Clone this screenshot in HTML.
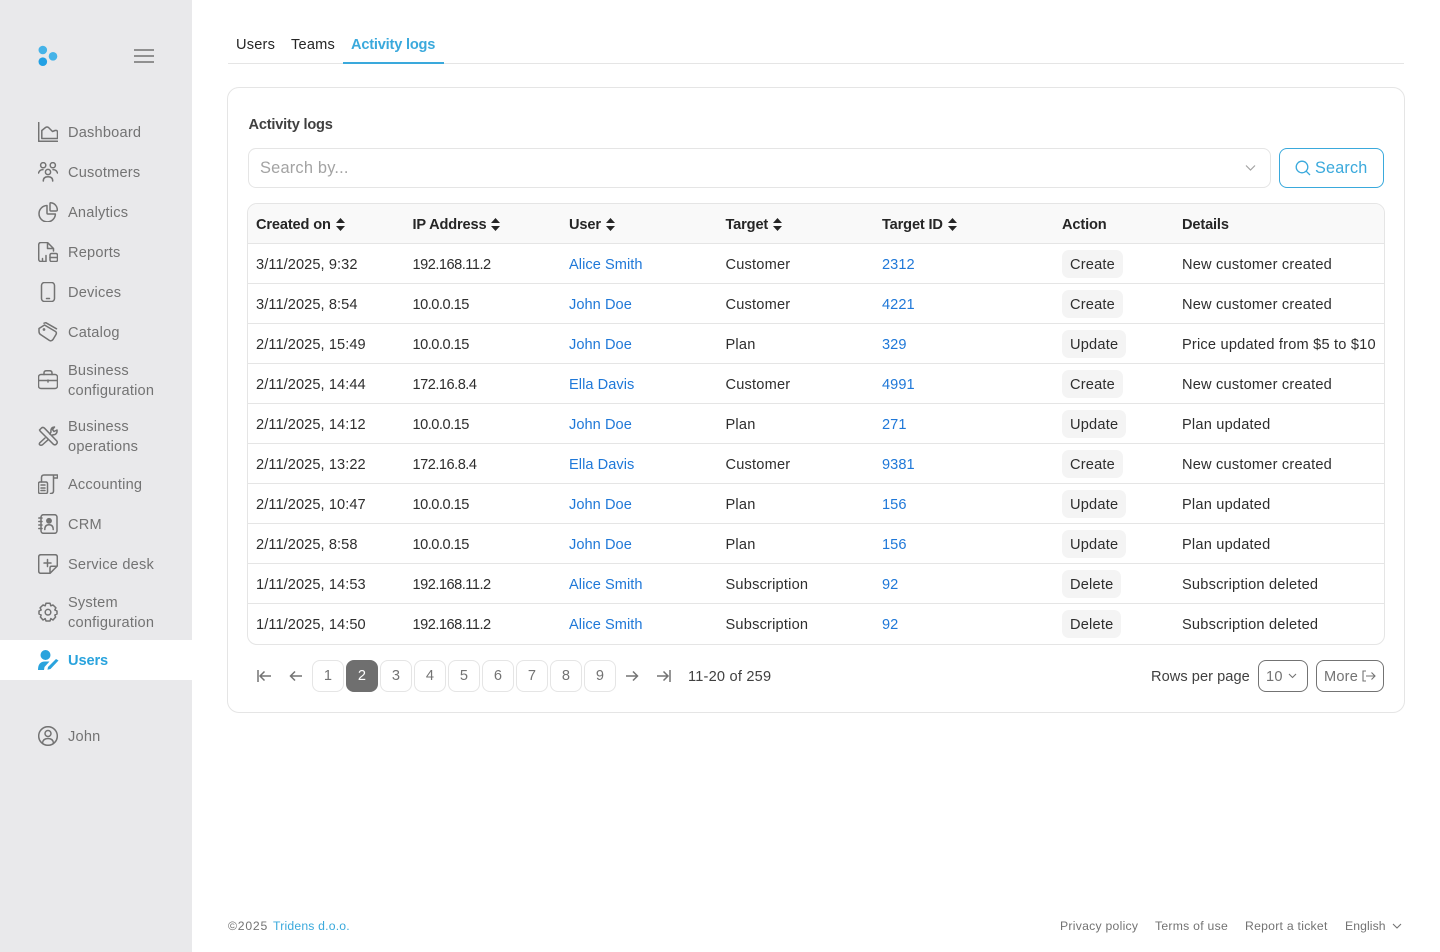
<!DOCTYPE html>
<html lang="en"><head><meta charset="utf-8"><title>Activity logs</title>
<style>
*{box-sizing:border-box}
html,body{margin:0;padding:0;width:1440px;height:952px;overflow:hidden;background:#fff;font-family:"Liberation Sans",sans-serif;font-size:14.6px;letter-spacing:.2px;color:#262626}
.a{position:absolute;white-space:nowrap}
#side{position:absolute;left:0;top:0;width:192px;height:952px;background:#e9e9eb}
.n{position:absolute;left:68px;margin-top:1px;color:#737373;line-height:20px;white-space:nowrap}
.i{position:absolute;left:38px;width:20px;height:20px;fill:none;stroke:#737373;stroke-width:1.5;stroke-linecap:round;stroke-linejoin:round}
.tab{position:absolute;top:37px;line-height:16px;color:#262626}
#card{position:absolute;left:227px;top:87px;width:1178px;height:626px;border:1px solid #e5e5e5;border-radius:12px}
#tw{position:absolute;left:247px;top:203px;width:1138px;height:442px;border:1px solid #e5e5e5;border-radius:10px;overflow:hidden}
table{border-collapse:collapse;table-layout:fixed;width:1136px}
th,td{padding:4px 0 0 8px;text-align:left;white-space:nowrap;height:40px;border-bottom:1px solid #e5e5e5;color:#2e2e2e;font-weight:400}
tr:last-child td{border-bottom:0}
th{background:#f9f9f9;font-weight:700;color:#262626;height:39px;padding-top:3px;letter-spacing:-.15px}
td a{color:#1f78d8;text-decoration:none;letter-spacing:.05px}
td:nth-child(1){letter-spacing:.08px}
td:nth-child(2){letter-spacing:-.5px}
.s{display:inline-block;width:9px;height:13px;margin-left:5px;vertical-align:-2px}
.c{display:inline-block;position:relative;top:-1px;height:28px;line-height:30px;padding:0 8px;background:#f4f4f4;border-radius:7px;vertical-align:middle}
.p{position:absolute;top:660px;width:32px;height:32px;border:1px solid #e5e5e5;border-radius:8px;text-align:center;line-height:30px;color:#737373}
.f{position:absolute;top:918px;font-size:12.2px;line-height:16px;color:#737373;white-space:nowrap;letter-spacing:.27px}
</style></head><body>
<div id="side">
<svg style="position:absolute;left:37px;top:45px" width="22" height="22" viewBox="0 0 22 22"><circle cx="5.8" cy="5" r="4.3" fill="#45b3e8"/><circle cx="16" cy="11.3" r="4.3" fill="#45b3e8"/><circle cx="5.8" cy="16.7" r="4.3" fill="#22a0e4"/></svg>
<svg style="position:absolute;left:134px;top:49px" width="20" height="14" viewBox="0 0 20 14" fill="none" stroke="#737373" stroke-width="1.4"><path d="M0 1H20M0 7H20M0 13H20"/></svg>

<svg class="i" style="top:122px" viewBox="0 0 20 20"><path d="M.7 .5V19.3H19.5M3.8 16.5H19.5V9.5Q19 8 17 8.5L14.5 9.5 10.5 5.5Q9 4.5 7.5 5.5L3.8 8.5Z"/></svg>
<div class="n" style="top:122px">Dashboard</div>

<svg class="i" style="top:162px" viewBox="0 0 20 20"><circle cx="5.2" cy="3.2" r="2.6"/><circle cx="14.8" cy="3.2" r="2.6"/><circle cx="10" cy="10" r="2.6"/><path d="M.5 11Q1.5 7.6 5 7.6M19.5 11Q18.5 7.6 15 7.6M5.3 19Q5.3 14.8 10 14.8T14.7 19"/></svg>
<div class="n" style="top:162px">Cusotmers</div>

<svg class="i" style="top:202px" viewBox="0 0 20 20"><path d="M9 3.5A8.2 8.2 0 1 0 17.4 12H10Q9 12 9 11Z"/><path d="M12.8 .8A7 7 0 0 1 19.3 8Q19.3 9 18.3 9H13Q12 9 12 8V1.6Q12 .7 12.8 .8Z"/></svg>
<div class="n" style="top:202px">Analytics</div>

<svg class="i" style="top:242px" viewBox="0 0 20 20"><path d="M8 19.5H3Q.7 19.5 .7 17V3Q.7 .5 3 .5H9.5L15.5 6.5V9M9.5 .5V6.5H15.5"/><path d="M4.5 16.5V19M8 13.5V19"/><rect x="12" y="11.5" width="7.5" height="8" rx="1.5"/><path d="M12 15.5H19.5"/></svg>
<div class="n" style="top:242px">Reports</div>

<svg class="i" style="top:282px" viewBox="0 0 20 20"><rect x="3.5" y=".5" width="13" height="19" rx="3"/><path d="M8.5 16.5H11.5"/></svg>
<div class="n" style="top:282px">Devices</div>

<svg class="i" style="top:322px" viewBox="0 0 20 20"><path d="M1 6.5 6.5 3 17.5 9.5Q19 10.5 18 12.5L15 17.5Q13.5 19.5 11.5 18.5L2.5 12.5Q1 11.5 1 9.5Z"/><path d="M6 1.2 7.8 .7 18.5 6.8"/><circle cx="6" cy="7.5" r=".6"/></svg>
<div class="n" style="top:322px">Catalog</div>

<svg class="i" style="top:370px" viewBox="0 0 20 20"><rect x=".5" y="4.5" width="19" height="14" rx="2.5"/><path d="M6 4.5V3Q6 .8 8.5 .8H11.5Q14 .8 14 3V4.5M.5 10.5H19.5M10 10V12"/></svg>
<div class="n" style="top:360px">Business<br>configuration</div>

<svg class="i" style="top:426px" viewBox="0 0 20 20"><path d="M1.5 4 3.5 2Q5 .8 6.5 2.2L18.8 15Q19.8 16.5 18.5 18T15.3 18.2L3 6Q2 5.2 1.5 4Z"/><path d="M7 12 1.8 16.8Q.7 18.3 2 19T4.8 18.5L10 13.8M11.8 8 13 6Q12.5 3 14.5 1.5L16.5 1 14.5 3.5 16 5.5 19 4Q19.5 7 17 8.5L14.5 9"/></svg>
<div class="n" style="top:416px">Business<br>operations</div>

<svg class="i" style="top:474px" viewBox="0 0 20 20"><rect x=".5" y="8" width="9" height="11.5" rx="1.5"/><path d="M3 11H7M3 14H7M3 16.5H7M3.5 8V3.5Q3.5 1 6 1H19.5V4H15.5M15.5 1.5V17Q15.5 19.5 12.5 19.5"/></svg>
<div class="n" style="top:474px">Accounting</div>

<svg class="i" style="top:514px" viewBox="0 0 20 20"><rect x="3" y=".7" width="16" height="18.6" rx="2.5"/><circle cx="11" cy="6.8" r="2.2" fill="#737373"/><path d="M6.8 15.5Q6.8 10.7 11 10.7T15.2 15.5M.8 4H4M.8 7.5H4M.8 11H4M.8 14.5H4"/></svg>
<div class="n" style="top:514px">CRM</div>

<svg class="i" style="top:554px" viewBox="0 0 20 20"><path d="M12 19.3H3Q.7 19.3.7 17V3Q.7.7 3 .7H17Q19.3.7 19.3 3V12L12 19.3ZM12 19V14Q12 12.3 13.5 12.3H19M9.5 5.5V12.5M6 9H13"/></svg>
<div class="n" style="top:554px">Service desk</div>

<svg class="i" style="top:602px" viewBox="0 0 20 20"><path d="M8 1.2H12L12.8 3.8 15 3 17.9 5.8 16.8 8 19 9V12L16.8 13 17.6 15 15 18 12.8 16.6 12 19H8L7.2 16.6 5 18 2.4 15 3.2 13 1 12V9L3.2 8 2.1 5.8 5 3 7.2 3.8Z"/><circle cx="10" cy="10.2" r="2.8"/></svg>
<div class="n" style="top:592px">System<br>configuration</div>

<div style="position:absolute;left:0;top:640px;width:192px;height:40px;background:#fff"></div>
<svg style="position:absolute;left:38px;top:650px" width="21" height="20" viewBox="0 0 21 20" fill="#29a3dd"><circle cx="7.5" cy="5" r="5"/><path d="M0 20Q0 11.5 7 11.5H11.5L6.5 17 6 20Z"/><path d="M9.5 19.8 10 17 18 9 20.5 10.5 12.5 19Z"/></svg>
<div class="n" style="top:650px;color:#29a3dd;font-weight:700;letter-spacing:-.1px">Users</div>

<svg class="i" style="top:726px" viewBox="0 0 20 20"><circle cx="10" cy="10" r="9.3"/><circle cx="10" cy="7.5" r="3"/><path d="M4.5 17Q5 12.5 10 12.5T15.5 17"/></svg>
<div class="n" style="top:726px">John</div>
</div>

<div class="tab" style="left:236px">Users</div>
<div class="tab" style="left:291px">Teams</div>
<div class="tab" style="left:351px;color:#3aa9dc;font-weight:700;letter-spacing:-.2px">Activity logs</div>
<div style="position:absolute;left:228px;top:63px;width:1176px;height:1px;background:#e5e5e5"></div>
<div style="position:absolute;left:343px;top:62px;width:101px;height:2px;background:#3aa9dc"></div>

<div id="card"></div>
<div class="a" style="left:248.5px;top:117px;line-height:16px;font-weight:700;color:#404040;letter-spacing:-.2px">Activity logs</div>

<div style="position:absolute;left:248px;top:148px;width:1023px;height:40px;border:1px solid #e5e5e5;border-radius:8px"></div>
<div class="a" style="left:260px;top:158px;line-height:20px;font-size:16.4px;color:#a3a3a3">Search by...</div>
<svg style="position:absolute;left:1245px;top:164px" width="11" height="8" viewBox="0 0 11 8" fill="none" stroke="#a3a3a3" stroke-width="1.2"><path d="M1 1.5 5.5 6 10 1.5"/></svg>
<div style="position:absolute;left:1279px;top:148px;width:105px;height:40px;border:1px solid #3aa9dc;border-radius:8px"></div>
<svg style="position:absolute;left:1295px;top:160px" width="16" height="16" viewBox="0 0 16 16" fill="none" stroke="#3aa9dc" stroke-width="1.3"><circle cx="7" cy="7" r="5.8"/><path d="M11.2 11.2 15 15"/></svg>
<div class="a" style="left:1315px;top:158px;line-height:20px;font-size:16.2px;color:#3aa9dc">Search</div>

<div id="tw"><table>
<colgroup><col style="width:156.5px"><col style="width:156.5px"><col style="width:156.5px"><col style="width:156.5px"><col style="width:180px"><col style="width:120px"><col></colgroup>
<tr><th>Created on<svg class="s" viewBox="0 0 9 13" fill="#262626"><path d="M4.5 0 9 5H0ZM4.5 13 0 8H9Z"/></svg></th><th>IP Address<svg class="s" viewBox="0 0 9 13" fill="#262626"><path d="M4.5 0 9 5H0ZM4.5 13 0 8H9Z"/></svg></th><th>User<svg class="s" viewBox="0 0 9 13" fill="#262626"><path d="M4.5 0 9 5H0ZM4.5 13 0 8H9Z"/></svg></th><th>Target<svg class="s" viewBox="0 0 9 13" fill="#262626"><path d="M4.5 0 9 5H0ZM4.5 13 0 8H9Z"/></svg></th><th>Target ID<svg class="s" viewBox="0 0 9 13" fill="#262626"><path d="M4.5 0 9 5H0ZM4.5 13 0 8H9Z"/></svg></th><th>Action</th><th>Details</th></tr>
<tr><td>3/11/2025, 9:32</td><td>192.168.11.2</td><td><a>Alice Smith</a></td><td>Customer</td><td><a>2312</a></td><td><span class="c">Create</span></td><td>New customer created</td></tr>
<tr><td>3/11/2025, 8:54</td><td>10.0.0.15</td><td><a>John Doe</a></td><td>Customer</td><td><a>4221</a></td><td><span class="c">Create</span></td><td>New customer created</td></tr>
<tr><td>2/11/2025, 15:49</td><td>10.0.0.15</td><td><a>John Doe</a></td><td>Plan</td><td><a>329</a></td><td><span class="c">Update</span></td><td>Price updated from $5 to $10</td></tr>
<tr><td>2/11/2025, 14:44</td><td>172.16.8.4</td><td><a>Ella Davis</a></td><td>Customer</td><td><a>4991</a></td><td><span class="c">Create</span></td><td>New customer created</td></tr>
<tr><td>2/11/2025, 14:12</td><td>10.0.0.15</td><td><a>John Doe</a></td><td>Plan</td><td><a>271</a></td><td><span class="c">Update</span></td><td>Plan updated</td></tr>
<tr><td>2/11/2025, 13:22</td><td>172.16.8.4</td><td><a>Ella Davis</a></td><td>Customer</td><td><a>9381</a></td><td><span class="c">Create</span></td><td>New customer created</td></tr>
<tr><td>2/11/2025, 10:47</td><td>10.0.0.15</td><td><a>John Doe</a></td><td>Plan</td><td><a>156</a></td><td><span class="c">Update</span></td><td>Plan updated</td></tr>
<tr><td>2/11/2025, 8:58</td><td>10.0.0.15</td><td><a>John Doe</a></td><td>Plan</td><td><a>156</a></td><td><span class="c">Update</span></td><td>Plan updated</td></tr>
<tr><td>1/11/2025, 14:53</td><td>192.168.11.2</td><td><a>Alice Smith</a></td><td>Subscription</td><td><a>92</a></td><td><span class="c">Delete</span></td><td>Subscription deleted</td></tr>
<tr><td>1/11/2025, 14:50</td><td>192.168.11.2</td><td><a>Alice Smith</a></td><td>Subscription</td><td><a>92</a></td><td><span class="c">Delete</span></td><td>Subscription deleted</td></tr>
</table></div>

<svg style="position:absolute;left:257px;top:670px" width="15" height="12" viewBox="0 0 15 12" fill="none" stroke="#737373" stroke-width="1.5"><path d="M1 0V12M14 6H3M7.5 1.5 3 6 7.5 10.5"/></svg>
<svg style="position:absolute;left:289px;top:670px" width="14" height="12" viewBox="0 0 14 12" fill="none" stroke="#737373" stroke-width="1.5"><path d="M13 6H1.5M6 1.5 1.5 6 6 10.5"/></svg>
<div class="p" style="left:312px">1</div>
<div class="p" style="left:346px;background:#6f6f6f;border-color:#6f6f6f;color:#fff">2</div>
<div class="p" style="left:380px">3</div>
<div class="p" style="left:414px">4</div>
<div class="p" style="left:448px">5</div>
<div class="p" style="left:482px">6</div>
<div class="p" style="left:516px">7</div>
<div class="p" style="left:550px">8</div>
<div class="p" style="left:584px">9</div>
<svg style="position:absolute;left:625px;top:670px" width="14" height="12" viewBox="0 0 14 12" fill="none" stroke="#737373" stroke-width="1.5"><path d="M1 6H12.5M8 1.5 12.5 6 8 10.5"/></svg>
<svg style="position:absolute;left:656px;top:670px" width="15" height="12" viewBox="0 0 15 12" fill="none" stroke="#737373" stroke-width="1.5"><path d="M14 0V12M1 6H12M7.5 1.5 12 6 7.5 10.5"/></svg>
<div class="a" style="left:688px;top:669px;line-height:16px;color:#404040;letter-spacing:.2px">11-20 of 259</div>

<div class="a" style="left:1151px;top:669px;line-height:16px;color:#404040;letter-spacing:.05px">Rows per page</div>
<div style="position:absolute;left:1258px;top:660px;width:50px;height:32px;border:1px solid #737373;border-radius:8px"></div>
<div class="a" style="left:1266px;top:669px;line-height:16px;color:#737373">10</div>
<svg style="position:absolute;left:1288px;top:673px" width="9" height="6" viewBox="0 0 9 6" fill="none" stroke="#737373" stroke-width="1.1"><path d="M1 1 4.5 4.5 8 1"/></svg>
<div style="position:absolute;left:1316px;top:660px;width:68px;height:32px;border:1px solid #737373;border-radius:8px"></div>
<div class="a" style="left:1324px;top:669px;line-height:16px;color:#737373">More</div>
<svg style="position:absolute;left:1362px;top:670px" width="14" height="12" viewBox="0 0 14 12" fill="none" stroke="#737373" stroke-width="1.1"><path d="M4 1H1V11H4M4 6H13M9.5 2.5 13 6 9.5 9.5"/></svg>

<div class="f" style="left:228px;letter-spacing:.8px">©2025</div>
<div class="f" style="left:273px;color:#3aa9dc;letter-spacing:.2px">Tridens d.o.o.</div>
<div class="f" style="left:1060px">Privacy policy</div>
<div class="f" style="left:1155px">Terms of use</div>
<div class="f" style="left:1245px">Report a ticket</div>
<div class="f" style="left:1345px;letter-spacing:.1px">English</div>
<svg style="position:absolute;left:1392px;top:923px" width="10" height="6" viewBox="0 0 10 6" fill="none" stroke="#737373" stroke-width="1.1"><path d="M1 1 5 5 9 1"/></svg>
</body></html>
